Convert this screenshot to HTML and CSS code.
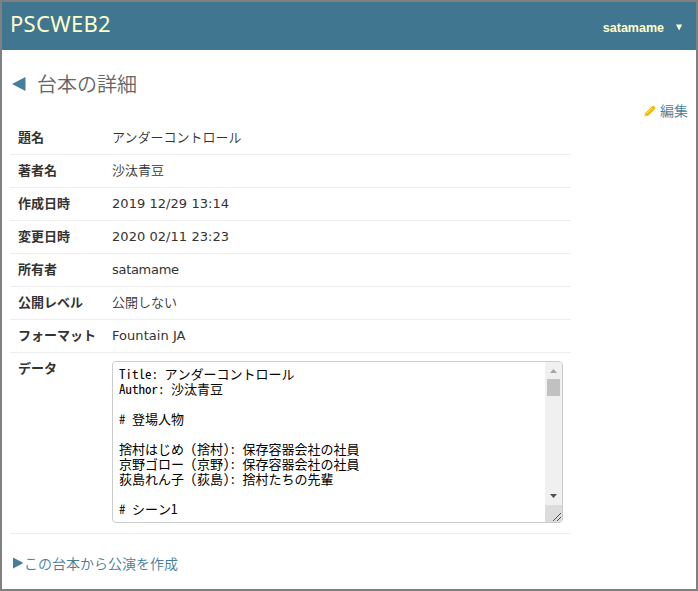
FILE: index.html
```
<!DOCTYPE html>
<html lang="ja">
<head>
<meta charset="utf-8">
<title>PSCWEB2</title>
<link rel="stylesheet" href="styles.css">
</head>
<body>
<header class="header">
  <a class="brand">PSCWEB2</a>
  <div class="user"><span>satamame</span><svg width="8" height="7" viewBox="0 0 8 7"><path d="M1 0.5h6.2L4.1 6.5z" fill="#ffc"/></svg></div>
</header>
<main class="content">
  <h1 class="title"><svg width="14" height="16" viewBox="0 0 14 16"><path d="M13.5 1v14L0 8z" fill="#447e9b"/></svg><span>台本の詳細</span></h1>
  <div class="tools">
    <svg width="12" height="12" viewBox="0 0 12 12"><path d="M0.4 11.6l.9-3.7 6.5-6.5q1.300-1.300 2.800.1t.1 2.800L4.200 10.700z" fill="#efb80b"/><path d="M2.600 8.500l5.400-5.400M1.500 10.400h1" stroke="#fff0a8" stroke-width=".8" fill="none"/></svg><a>編集</a>
  </div>
  <table class="details">
    <tr><th>題名</th><td>アンダーコントロール</td></tr>
    <tr><th>著者名</th><td>沙汰青豆</td></tr>
    <tr><th>作成日時</th><td class="latin">2019 12/29 13:14</td></tr>
    <tr><th>変更日時</th><td class="latin">2020 02/11 23:23</td></tr>
    <tr><th>所有者</th><td class="latin name">satamame</td></tr>
    <tr><th>公開レベル</th><td>公開しない</td></tr>
    <tr><th>フォーマット</th><td class="latin format">Fountain JA</td></tr>
    <tr class="data"><th>データ</th><td>
      <div class="box">
<pre class="text">Title: アンダーコントロール
Author: 沙汰青豆

# 登場人物

捨村はじめ (捨村): 保存容器会社の社員
京野ゴロー (京野): 保存容器会社の社員
荻島れん子 (荻島): 捨村たちの先輩

# シーン1</pre>
        <div class="scroll">
          <svg width="17" height="17" viewBox="0 0 17 17"><path d="M5 11h7L8.500 7z" fill="#a3a3a3"/></svg>
          <div class="thumb"></div>
          <svg class="down" width="17" height="17" viewBox="0 0 17 17"><path d="M5 6h7L8.500 10z" fill="#505050"/></svg>
          <svg class="grip" width="17" height="17" viewBox="0 0 17 17"><path d="M8 16l8-8M12 16l4-4" stroke="#555" fill="none"/></svg>
        </div>
      </div>
    </td></tr>
  </table>
  <a class="create"><svg width="11" height="12" viewBox="0 0 11 12"><path d="M0 .5L10.500 6 0 11.500z" fill="#447e9b"/></svg><span>この台本から公演を作成</span></a>
</main>
</body>
</html>
```
FILE: styles.css
```
* { box-sizing: border-box; }
body {
  margin: 0;
  height: 591px;
  overflow: hidden;
  border: 2px solid #808080;
  background: #fff;
  color: #333;
  font: 13px/16px "DejaVu Sans", "Noto Sans CJK JP", sans-serif;
}
svg { display: block; flex: none; }
.header {
  height: 48px;
  padding: 0 13px 0 8px;
  display: flex;
  justify-content: space-between;
  background: #417690;
  color: #ffc;
}
.brand { font: 22px/43px "Noto Sans", sans-serif; letter-spacing: 0.3px; }
.user {
  display: flex;
  align-items: center;
  gap: 11px;
  padding-top: 3px;
  font: bold 12.5px/16px "Liberation Sans", sans-serif;
}
.content { padding: 20px 8px 0; }
.title {
  display: flex;
  align-items: center;
  gap: 11px;
  height: 28px;
  margin: 0;
  padding-left: 2px;
  color: #666;
  font: 350 20px/28px "Noto Sans CJK JP", sans-serif;
}
.tools {
  display: flex;
  justify-content: flex-end;
  align-items: center;
  gap: 4px;
  height: 26px;
  color: #447e9b;
  font: 350 14px/24px "Noto Sans CJK JP", sans-serif;
}
.tools a { padding-bottom: 2px; }
.details {
  width: 561px;
  margin-top: -2px;
  border-collapse: separate;
  border-spacing: 0;
}
.details th, .details td {
  height: 33px;
  padding: 8px;
  border-bottom: 1px solid #eee;
  text-align: left;
  vertical-align: top;
  white-space: nowrap;
}
.details th { width: 94px; font-weight: bold; }
.details td { font-weight: 350; }
.details .latin { font-weight: 400; letter-spacing: 0.05px; }
.details .name { letter-spacing: -0.3px; }
.details .format { letter-spacing: 0.05px; }
.details .data td { height: 181px; padding-bottom: 10px; }
.box {
  display: flex;
  width: 451px;
  height: 162px;
  border: 1px solid #ccc;
  border-radius: 4px;
  overflow: hidden;
}
.text {
  flex: 1;
  margin: 0;
  padding: 4px 6px;
  color: #000;
  font: 350 13px/15px "Noto Sans Mono CJK JP", "Noto Sans CJK JP", monospace;
}
.scroll {
  display: flex;
  flex-direction: column;
  width: 17px;
  background: #f0f0f0;
}
.thumb { width: 13px; height: 17px; margin: 0 2px; background: #c1c1c1; }
.down { margin-top: auto; }
.grip { background: #dcdcdc; }
.create {
  display: flex;
  align-items: center;
  gap: 0;
  margin-top: 19px;
  padding-left: 3px;
  color: #447e9b;
  font: 350 14px/20px "Noto Sans CJK JP", sans-serif;
}
```
